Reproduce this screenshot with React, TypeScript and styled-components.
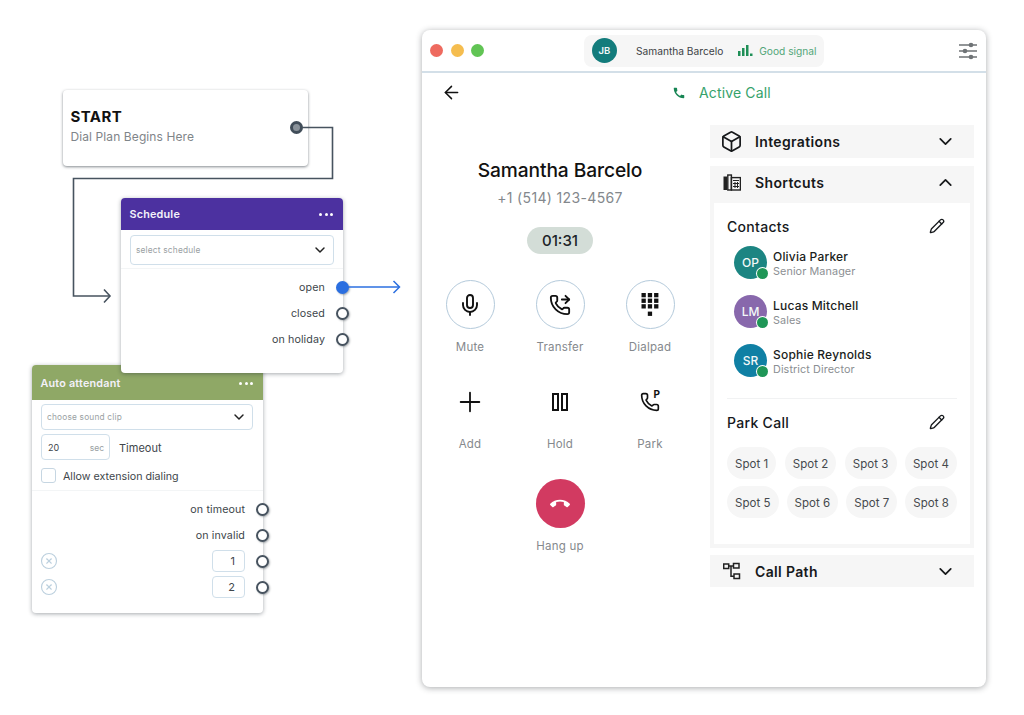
import React from "react";
import styled, { createGlobalStyle } from "styled-components";
import { Box, ChevronDown, ChevronUp, CircleX, Pencil, ArrowLeft, Plus, Mic, PhoneForwarded, Phone } from "lucide-react";
import { MdCall, MdCallEnd } from "react-icons/md";

const Global = createGlobalStyle`
  html, body { margin: 0; padding: 0; background: #fff; }
  body { font-family: Inter, "Liberation Sans", sans-serif; color: #16191c; }
  * { box-sizing: border-box; }
`;

const Canvas = styled.div`
  position: relative;
  width: 1024px;
  height: 715px;
  overflow: hidden;
  background: #fff;
`;

const Wires = styled.svg`
  position: absolute;
  left: 0;
  top: 0;
  z-index: 4;
  pointer-events: none;
`;

const Node = styled.div<{ $x: number; $y: number; $w: number; $h: number; $z: number }>`
  position: absolute;
  left: ${(p) => p.$x}px;
  top: ${(p) => p.$y}px;
  width: ${(p) => p.$w}px;
  height: ${(p) => p.$h}px;
  z-index: ${(p) => p.$z};
  background: #fff;
  border-radius: 4px;
  box-shadow: 0 1px 4px rgba(30, 40, 50, 0.4);
`;

const StartNode = styled(Node)`
  padding: 18px 7.5px;
  box-shadow: 0 1px 3px rgba(30, 40, 50, 0.55);
`;

const StartTitle = styled.div`
  font-size: 15px;
  line-height: 18px;
  font-weight: 700;
  letter-spacing: 0.4px;
  color: #111;
`;

const StartSub = styled.div`
  margin-top: 2px;
  font-size: 12px;
  line-height: 18px;
  letter-spacing: 0.1px;
  color: #7f8589;
`;

const StartPort = styled.div`
  position: absolute;
  left: 227px;
  top: 31px;
  width: 13px;
  height: 13px;
  border-radius: 50%;
  background: #8a929a;
  border: 3px solid #414d59;
`;

const NodeHeader = styled.div<{ $bg: string; $h: number; $pt?: number }>`
  display: flex;
  align-items: center;
  justify-content: space-between;
  height: ${(p) => p.$h}px;
  padding: ${(p) => p.$pt ?? 0}px 10px 0 8.5px;
  background: ${(p) => p.$bg};
  border-radius: 4px 4px 0 0;
  color: #f3f1fa;
  font-size: 10.8px;
  font-weight: 600;
  letter-spacing: 0.2px;
`;

const Dots = styled.span`
  display: flex;
  gap: 2.5px;
  & i {
    width: 3px;
    height: 3px;
    border-radius: 50%;
    background: #fff;
  }
`;

const Select = styled.div<{ $mt: number; $mx: number; $w: number; $h: number }>`
  display: flex;
  align-items: center;
  justify-content: space-between;
  width: ${(p) => p.$w}px;
  height: ${(p) => p.$h}px;
  margin: ${(p) => p.$mt}px 0 0 ${(p) => p.$mx}px;
  padding: 0 5px;
  border: 1px solid #d0dfea;
  border-radius: 4px;
  font-size: 8.3px;
  letter-spacing: 0.2px;
  color: #9a9fa3;
`;

const Divider = styled.div<{ $mt: number }>`
  margin-top: ${(p) => p.$mt}px;
  height: 1px;
  background: #f3f5f6;
`;

const PortRows = styled.div<{ $mt: number }>`
  margin-top: ${(p) => p.$mt}px;
`;

const PortRow = styled.div<{ $pr: number }>`
  position: relative;
  display: flex;
  align-items: center;
  justify-content: flex-end;
  height: 26px;
  padding: 0 ${(p) => p.$pr}px 0 8px;
  font-size: 10.7px;
  letter-spacing: 0.1px;
  color: #40464b;
`;

const Port = styled.span<{ $active?: boolean }>`
  position: absolute;
  right: -6px;
  top: 50%;
  width: 13px;
  height: 13px;
  margin-top: -6.5px;
  border-radius: 50%;
  background: ${(p) => (p.$active ? "#2b6fe0" : "#fff")};
  border: 2px solid ${(p) => (p.$active ? "#2b6fe0" : "#47535f")};
  box-shadow: 1px 1px 2px rgba(30, 40, 50, 0.35);
`;

const RemoveIcon = styled.span`
  display: flex;
  margin-right: auto;
  color: #bcd0de;
`;

const NumberBox = styled.span`
  display: flex;
  align-items: center;
  justify-content: flex-end;
  width: 33px;
  height: 22px;
  padding-right: 9px;
  border: 1px solid #d0dfea;
  border-radius: 4px;
  font-size: 11px;
  color: #40464b;
`;

const TimeoutRow = styled.div`
  display: flex;
  align-items: center;
  margin: 4px 0 0 9px;
  gap: 9px;
  font-size: 11px;
  color: #40464b;
`;

const FieldLabel = styled.span`
  padding-top: 2px;
`;

const TimeoutBox = styled.div`
  display: flex;
  align-items: center;
  justify-content: space-between;
  width: 69px;
  height: 26px;
  padding: 1px 5px 0 6px;
  border: 1px solid #d0dfea;
  border-radius: 4px;
  font-size: 9px;
  & small {
    font-size: 8.5px;
    color: #9a9fa3;
  }
`;

const CheckRow = styled.div`
  display: flex;
  align-items: center;
  gap: 7px;
  margin: 8px 0 0 9px;
  height: 15px;
  font-size: 10.7px;
  color: #40464b;
`;

const CheckBox = styled.span`
  width: 15px;
  height: 15px;
  border: 1px solid #c6d6e2;
  border-radius: 3px;
`;

const Window = styled.div`
  position: absolute;
  left: 422px;
  top: 30px;
  width: 564px;
  height: 657px;
  display: flex;
  flex-direction: column;
  z-index: 1;
  background: #fff;
  border-radius: 8px;
  box-shadow: 0 1px 6px rgba(30, 35, 40, 0.38);
`;

const TitleBar = styled.div`
  display: flex;
  align-items: center;
  flex: none;
  height: 43px;
  padding: 0 0 0 8px;
  border-bottom: 2px solid #d3dfe8;
`;

const Lights = styled.div`
  display: flex;
  gap: 7.5px;
`;

const Light = styled.span<{ $c: string }>`
  width: 13px;
  height: 13px;
  border-radius: 50%;
  background: ${(p) => p.$c};
`;

const CallerPill = styled.div`
  display: flex;
  align-items: center;
  width: 240px;
  height: 32px;
  margin-left: 100px;
  padding-left: 8px;
  background: #f6f6f6;
  border-radius: 8px;
`;

const JbAvatar = styled.span`
  display: flex;
  flex: none;
  align-items: center;
  justify-content: center;
  width: 25px;
  height: 25px;
  border-radius: 50%;
  background: #137c7c;
  color: #f2f8f8;
  font-size: 9.5px;
  font-weight: 600;
`;

const CallerName = styled.span`
  margin-left: 19px;
  font-size: 10.2px;
  color: #3c4145;
`;

const SignalText = styled.span`
  margin-left: 6px;
  font-size: 10.2px;
  color: #52a679;
`;

const SignalIcon = styled.svg`
  margin-left: 15px;
  color: #1f8f57;
`;

const SettingsIcon = styled.svg`
  margin-left: auto;
  margin-right: 9px;
  color: #6f7376;
`;

const SubBar = styled.div`
  display: flex;
  align-items: center;
  flex: none;
  height: 40px;
  padding: 0 0 1px 18.5px;
  color: #111;
`;

const ActiveCall = styled.div`
  display: flex;
  align-items: center;
  margin-left: 210.5px;
  gap: 13px;
  color: #36a26b;
  font-size: 14px;
  letter-spacing: 0.15px;
  & svg {
    color: #178554;
  }
`;

const Body = styled.div`
  display: flex;
  flex: 1;
`;

const CallCol = styled.div`
  display: flex;
  flex-direction: column;
  align-items: center;
  width: 276px;
  padding-top: 43px;
`;

const CallerTitle = styled.div`
  font-size: 19.2px;
  line-height: 28px;
  font-weight: 500;
  letter-spacing: -0.1px;
  color: #111;
`;

const CallerPhone = styled.div`
  margin-top: 4px;
  font-size: 14px;
  line-height: 20px;
  letter-spacing: 0.35px;
  color: #83888c;
`;

const Timer = styled.div`
  display: flex;
  align-items: center;
  justify-content: center;
  width: 66px;
  height: 27px;
  margin-top: 19px;
  border-radius: 14px;
  background: #d3ddd7;
  font-size: 15px;
  font-weight: 500;
  color: #202427;
`;

const Actions = styled.div`
  display: grid;
  grid-template-columns: repeat(3, 90px);
  row-gap: 22px;
  margin-top: 26px;
  justify-items: center;
`;

const Action = styled.div`
  display: flex;
  flex-direction: column;
  align-items: center;
  width: 90px;
`;

const ActionIcon = styled.div<{ $ring?: boolean; $danger?: boolean }>`
  position: relative;
  display: flex;
  align-items: center;
  justify-content: center;
  width: 49px;
  height: 49px;
  border-radius: 50%;
  border: ${(p) => (p.$ring ? "1px solid #b4cadb" : "none")};
  background: ${(p) => (p.$danger ? "#d23a61" : "transparent")};
  color: ${(p) => (p.$danger ? "#fff" : "#111")};
`;

const ActionLabel = styled.div`
  margin-top: 10px;
  font-size: 11.5px;
  line-height: 16px;
  letter-spacing: 0.2px;
  color: #85898d;
`;

const HangupWrap = styled.div`
  margin-top: 27px;
`;

const ParkLetter = styled.span`
  position: absolute;
  left: 28px;
  top: 12px;
  font-size: 10px;
  line-height: 10px;
  font-weight: 700;
  color: #111;
`;

const SideCol = styled.div`
  display: flex;
  flex-direction: column;
  width: 264px;
  margin-left: 12px;
  padding-top: 12px;
`;

const AccHeader = styled.div<{ $h: number; $mt?: number; $pb?: number }>`
  display: flex;
  align-items: center;
  height: ${(p) => p.$h}px;
  margin-top: ${(p) => p.$mt ?? 0}px;
  padding: 0 18.5px ${(p) => p.$pb ?? 0}px 13px;
  background: #f6f6f6;
  font-size: 14px;
  font-weight: 600;
  letter-spacing: 0.35px;
  color: #17191b;
  & > svg:first-child {
    flex: none;
    margin-right: 14px;
  }
  & > svg:last-child {
    margin-left: auto;
  }
`;

const CubeIcon = styled(Box)`
  &&& {
    margin: 0 12px 0 -3px;
  }
`;

const AccBody = styled.div`
  padding: 0 4px 4px;
  background: #f6f6f6;
`;

const Inner = styled.div`
  padding: 13px 13px 26px;
  background: #fff;
`;

const SectionHead = styled.div<{ $mt?: number }>`
  display: flex;
  align-items: center;
  justify-content: space-between;
  height: 20px;
  margin-top: ${(p) => p.$mt ?? 0}px;
  padding-right: 12px;
  font-size: 14px;
  font-weight: 500;
  letter-spacing: 0.3px;
  color: #16191c;
`;

const ContactList = styled.div`
  display: flex;
  flex-direction: column;
  gap: 16px;
  margin-top: 10px;
  padding-left: 7px;
`;

const Contact = styled.div`
  display: flex;
  align-items: center;
  gap: 6px;
  height: 33px;
`;

const Avatar = styled.span<{ $c: string }>`
  position: relative;
  display: flex;
  flex: none;
  align-items: center;
  justify-content: center;
  width: 33px;
  height: 33px;
  border-radius: 50%;
  background: ${(p) => p.$c};
  color: #f3f8f8;
  font-size: 12px;
  font-weight: 500;
`;

const Presence = styled.span`
  position: absolute;
  right: -1px;
  bottom: 0;
  width: 11px;
  height: 11px;
  border-radius: 50%;
  background: #1f9657;
  box-shadow: 0 0 0 1px #fff;
`;

const ContactText = styled.div`
  padding-top: 3px;
`;

const ContactName = styled.div`
  font-size: 12px;
  line-height: 15px;
  font-weight: 500;
  letter-spacing: 0.2px;
  color: #1a1d20;
`;

const ContactRole = styled.div`
  font-size: 10.8px;
  line-height: 15px;
  letter-spacing: 0.1px;
  color: #8b8f93;
`;

const Rule = styled.div`
  margin-top: 21px;
  height: 1px;
  background: #f1f2f3;
`;

const SpotGrid = styled.div`
  display: flex;
  flex-direction: column;
  gap: 7px;
  margin-top: 15px;
`;

const SpotRow = styled.div`
  display: flex;
  justify-content: space-between;
`;

const Spot = styled.span`
  display: flex;
  align-items: center;
  height: 32px;
  padding: 1px 8px 0;
  border-radius: 16px;
  background: #f6f6f6;
  font-size: 11.5px;
  letter-spacing: 0.05px;
  color: #45494d;
`;

const Dots3 = () => (
  <Dots>
    <i />
    <i />
    <i />
  </Dots>
);

const DeskPhone = () => (
  <svg width="18" height="18" viewBox="0 0 18 18" fill="none">
    <rect x="0.5" y="2.5" width="3.5" height="13.5" fill="#222" />
    <rect x="4.8" y="1" width="3.6" height="15" fill="none" stroke="#222" strokeWidth="1.4" />
    <rect x="8.4" y="3.6" width="9" height="12.4" fill="none" stroke="#222" strokeWidth="1.4" />
    <path d="M10 6.5h6M10 9.5h6M10 12.5h6M12 8v6M14.5 8v6" stroke="#222" strokeWidth="1" />
  </svg>
);

const PathIcon = () => (
  <svg width="18" height="18" viewBox="0 0 18 18" fill="none" stroke="#222" strokeWidth="1.5">
    <rect x="0.7" y="2" width="5" height="4.5" />
    <rect x="10.5" y="1.5" width="5.5" height="4.5" />
    <rect x="11" y="12" width="5.5" height="4.5" />
    <path d="M5.7 4h4.8M8 4v10.2h3" />
  </svg>
);

const HoldIcon = () => (
  <svg width="18" height="20" viewBox="0 0 18 20" fill="none" stroke="#111" strokeWidth="2">
    <rect x="2" y="2" width="5" height="16" />
    <rect x="11" y="2" width="5" height="16" />
  </svg>
);

const DialpadIcon = () => (
  <svg width="18" height="24" viewBox="0 0 18 24" fill="#111">
    {[0, 5.6, 11.2].map((y) =>
      [0.5, 6.8, 13.1].map((x) => <rect key={`${x}-${y}`} x={x} y={y} width="4.3" height="4.3" />)
    )}
    <rect x="6.8" y="18.6" width="4.3" height="4.3" />
  </svg>
);

const spotsA = ["Spot 1", "Spot 2", "Spot 3", "Spot 4"];
const spotsB = ["Spot 5", "Spot 6", "Spot 7", "Spot 8"];
const contacts = [
  { i: "OP", c: "#1c8582", n: "Olivia Parker", r: "Senior Manager" },
  { i: "LM", c: "#8868ac", n: "Lucas Mitchell", r: "Sales" },
  { i: "SR", c: "#1080a4", n: "Sophie Reynolds", r: "District Director" },
];

export default function App() {
  return (
    <Canvas>
      <Global />
      <Wires width="1024" height="715" viewBox="0 0 1024 715" fill="none">
        <path d="M302 127.5H332.5V178.5H73.5V296H109" stroke="#47535f" strokeWidth="1.6" />
        <path d="M104 289.5L110 296L104 302.5" stroke="#47535f" strokeWidth="1.6" />
        <path d="M348 287H399" stroke="#2b6fe0" strokeWidth="1.5" />
        <path d="M393.5 281L399.5 287L393.5 293" stroke="#2b6fe0" strokeWidth="1.5" />
      </Wires>

      <StartNode $x={63} $y={90} $w={245} $h={76} $z={2}>
        <StartTitle>START</StartTitle>
        <StartSub>Dial Plan Begins Here</StartSub>
        <StartPort />
      </StartNode>

      <Node $x={121} $y={198} $w={222} $h={175} $z={3}>
        <NodeHeader $bg="#4c31a0" $h={32}>
          Schedule
          <Dots3 />
        </NodeHeader>
        <Select $mt={5} $mx={9} $w={204} $h={30}>
          select schedule
          <ChevronDown size={16} color="#222" strokeWidth={2.2} />
        </Select>
        <Divider $mt={3} />
        <PortRows $mt={5}>
          <PortRow $pr={18}>
            open
            <Port $active />
          </PortRow>
          <PortRow $pr={18}>
            closed
            <Port />
          </PortRow>
          <PortRow $pr={18}>
            on holiday
            <Port />
          </PortRow>
        </PortRows>
      </Node>

      <Node $x={32} $y={365} $w={231} $h={248} $z={2}>
        <NodeHeader $bg="#8fa866" $h={35} $pt={1}>
          Auto attendant
          <Dots3 />
        </NodeHeader>
        <Select $mt={4} $mx={9} $w={212} $h={26}>
          choose sound clip
          <ChevronDown size={16} color="#222" strokeWidth={2.2} />
        </Select>
        <TimeoutRow>
          <TimeoutBox>
            20
            <small>sec</small>
          </TimeoutBox>
          <FieldLabel>Timeout</FieldLabel>
        </TimeoutRow>
        <CheckRow>
          <CheckBox />
          <FieldLabel>Allow extension dialing</FieldLabel>
        </CheckRow>
        <Divider $mt={7} />
        <PortRows $mt={5}>
          <PortRow $pr={18}>
            on timeout
            <Port />
          </PortRow>
          <PortRow $pr={18}>
            on invalid
            <Port />
          </PortRow>
          <PortRow $pr={18}>
            <RemoveIcon>
              <CircleX size={18} strokeWidth={1.5} />
            </RemoveIcon>
            <NumberBox>1</NumberBox>
            <Port />
          </PortRow>
          <PortRow $pr={18}>
            <RemoveIcon>
              <CircleX size={18} strokeWidth={1.5} />
            </RemoveIcon>
            <NumberBox>2</NumberBox>
            <Port />
          </PortRow>
        </PortRows>
      </Node>

      <Window>
        <TitleBar>
          <Lights>
            <Light $c="#ee6a5f" />
            <Light $c="#f5bd4f" />
            <Light $c="#61c454" />
          </Lights>
          <CallerPill>
            <JbAvatar>JB</JbAvatar>
            <CallerName>Samantha Barcelo</CallerName>
            <SignalIcon width="15" height="11" viewBox="0 0 15 11" fill="currentColor">
              <rect x="0" y="6" width="2.5" height="5" />
              <rect x="4" y="3" width="2.5" height="8" />
              <rect x="8" y="0" width="2.5" height="11" />
              <rect x="12" y="8.5" width="2.5" height="2.5" />
            </SignalIcon>
            <SignalText>Good signal</SignalText>
          </CallerPill>
          <SettingsIcon width="18" height="18" viewBox="0 0 18 18" fill="currentColor">
            <path d="M0 3h18M0 9h18M0 15h18" stroke="currentColor" strokeWidth="1.5" fill="none" />
            <circle cx="12" cy="3" r="2.3" />
            <circle cx="6" cy="9" r="2.3" />
            <circle cx="12" cy="15" r="2.3" />
          </SettingsIcon>
        </TitleBar>

        <SubBar>
          <ArrowLeft size={21} strokeWidth={1.7} />
          <ActiveCall>
            <MdCall size={14} />
            Active Call
          </ActiveCall>
        </SubBar>

        <Body>
          <CallCol>
            <CallerTitle>Samantha Barcelo</CallerTitle>
            <CallerPhone>+1 (514) 123-4567</CallerPhone>
            <Timer>01:31</Timer>
            <Actions>
              <Action>
                <ActionIcon $ring>
                  <Mic size={24} strokeWidth={1.9} />
                </ActionIcon>
                <ActionLabel>Mute</ActionLabel>
              </Action>
              <Action>
                <ActionIcon $ring>
                  <PhoneForwarded size={22} strokeWidth={2} />
                </ActionIcon>
                <ActionLabel>Transfer</ActionLabel>
              </Action>
              <Action>
                <ActionIcon $ring>
                  <DialpadIcon />
                </ActionIcon>
                <ActionLabel>Dialpad</ActionLabel>
              </Action>
              <Action>
                <ActionIcon>
                  <Plus size={32} strokeWidth={1.35} />
                </ActionIcon>
                <ActionLabel>Add</ActionLabel>
              </Action>
              <Action>
                <ActionIcon>
                  <HoldIcon />
                </ActionIcon>
                <ActionLabel>Hold</ActionLabel>
              </Action>
              <Action>
                <ActionIcon>
                  <Phone size={20} strokeWidth={2} />
                  <ParkLetter>P</ParkLetter>
                </ActionIcon>
                <ActionLabel>Park</ActionLabel>
              </Action>
            </Actions>
            <HangupWrap>
              <Action>
                <ActionIcon $danger>
                  <MdCallEnd size={20} />
                </ActionIcon>
                <ActionLabel>Hang up</ActionLabel>
              </Action>
            </HangupWrap>
          </CallCol>

          <SideCol>
            <AccHeader $h={33}>
              <CubeIcon size={23} strokeWidth={1.8} />
              Integrations
              <ChevronDown size={21} strokeWidth={2} />
            </AccHeader>
            <AccHeader $h={37} $mt={8} $pb={4}>
              <DeskPhone />
              Shortcuts
              <ChevronUp size={21} strokeWidth={2} />
            </AccHeader>
            <AccBody>
              <Inner>
                <SectionHead>
                  Contacts
                  <Pencil size={16} strokeWidth={2} />
                </SectionHead>
                <ContactList>
                  {contacts.map((c) => (
                    <Contact key={c.i}>
                      <Avatar $c={c.c}>
                        {c.i}
                        <Presence />
                      </Avatar>
                      <ContactText>
                        <ContactName>{c.n}</ContactName>
                        <ContactRole>{c.r}</ContactRole>
                      </ContactText>
                    </Contact>
                  ))}
                </ContactList>
                <Rule />
                <SectionHead $mt={13}>
                  Park Call
                  <Pencil size={16} strokeWidth={2} />
                </SectionHead>
                <SpotGrid>
                  <SpotRow>
                    {spotsA.map((s) => (
                      <Spot key={s}>{s}</Spot>
                    ))}
                  </SpotRow>
                  <SpotRow>
                    {spotsB.map((s) => (
                      <Spot key={s}>{s}</Spot>
                    ))}
                  </SpotRow>
                </SpotGrid>
              </Inner>
            </AccBody>
            <AccHeader $h={32} $mt={7}>
              <PathIcon />
              Call Path
              <ChevronDown size={21} strokeWidth={2} />
            </AccHeader>
          </SideCol>
        </Body>
      </Window>
    </Canvas>
  );
}
